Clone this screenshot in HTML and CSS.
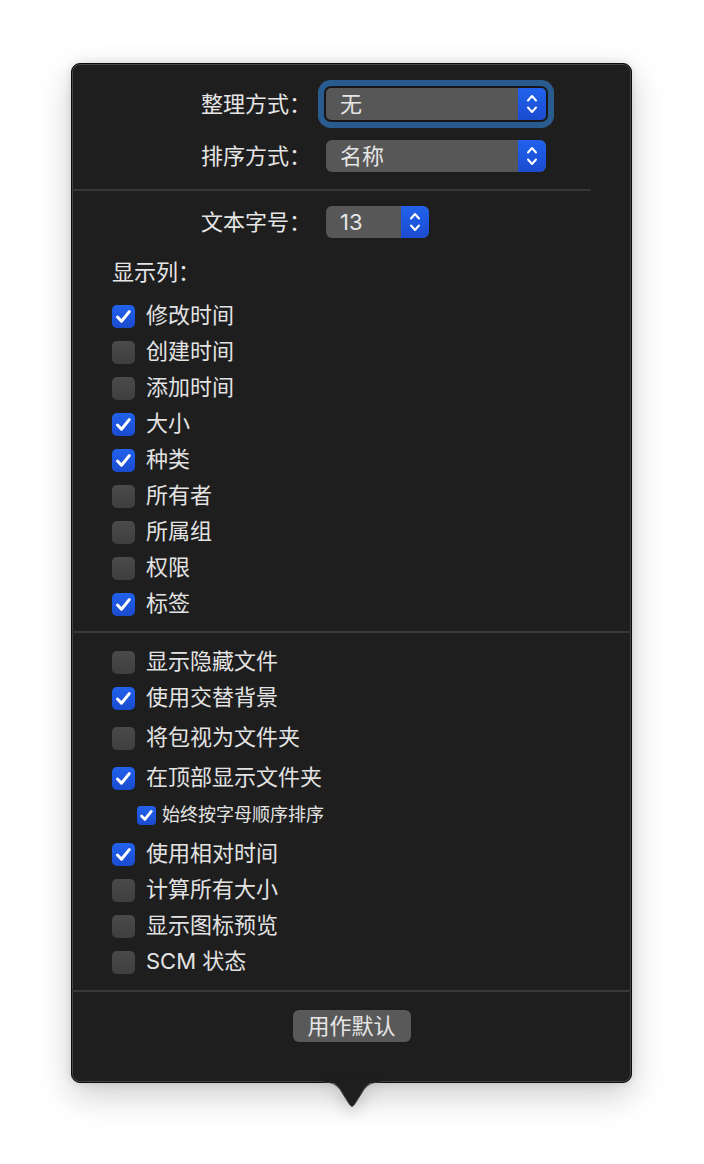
FILE: index.html
```html
<!DOCTYPE html>
<html lang="zh-CN">
<head>
<meta charset="utf-8">
<title>显示选项</title>
<link rel="stylesheet" href="styles.css">
</head>
<body>
<div class="stage">
  <div class="panel">
    <div class="field">
      <span class="label">整理方式：</span>
      <div class="popup wide focus">
        <span class="value">无</span>
        <span class="arrows"><svg viewBox="0 0 28 32" width="28" height="32"><path d="M10 12.5 L14 8 L18 12.5 M10 19.5 L14 24 L18 19.5"/></svg></span>
      </div>
    </div>
    <div class="field second">
      <span class="label">排序方式：</span>
      <div class="popup wide">
        <span class="value">名称</span>
        <span class="arrows"><svg viewBox="0 0 28 32" width="28" height="32"><path d="M10 12.5 L14 8 L18 12.5 M10 19.5 L14 24 L18 19.5"/></svg></span>
      </div>
    </div>
    <div class="divider short"></div>
    <div class="field">
      <span class="label">文本字号：</span>
      <div class="popup narrow">
        <span class="value">13</span>
        <span class="arrows"><svg viewBox="0 0 28 32" width="28" height="32"><path d="M10 12.5 L14 8 L18 12.5 M10 19.5 L14 24 L18 19.5"/></svg></span>
      </div>
    </div>
    <div class="heading"><span class="txt">显示列：</span></div>
    <ul class="checks cols">
      <li class="check"><span class="box on"><svg viewBox="0 0 23 23"><path d="M5.5 12 L9.5 16.2 L17.3 6.6"/></svg></span><span class="txt">修改时间</span></li>
      <li class="check"><span class="box"></span><span class="txt">创建时间</span></li>
      <li class="check"><span class="box"></span><span class="txt">添加时间</span></li>
      <li class="check"><span class="box on"><svg viewBox="0 0 23 23"><path d="M5.5 12 L9.5 16.2 L17.3 6.6"/></svg></span><span class="txt">大小</span></li>
      <li class="check"><span class="box on"><svg viewBox="0 0 23 23"><path d="M5.5 12 L9.5 16.2 L17.3 6.6"/></svg></span><span class="txt">种类</span></li>
      <li class="check"><span class="box"></span><span class="txt">所有者</span></li>
      <li class="check"><span class="box"></span><span class="txt">所属组</span></li>
      <li class="check"><span class="box"></span><span class="txt">权限</span></li>
      <li class="check"><span class="box on"><svg viewBox="0 0 23 23"><path d="M5.5 12 L9.5 16.2 L17.3 6.6"/></svg></span><span class="txt">标签</span></li>
    </ul>
    <div class="divider mid"></div>
    <ul class="checks opts">
      <li class="check"><span class="box"></span><span class="txt">显示隐藏文件</span></li>
      <li class="check"><span class="box on"><svg viewBox="0 0 23 23"><path d="M5.5 12 L9.5 16.2 L17.3 6.6"/></svg></span><span class="txt">使用交替背景</span></li>
      <li class="check spaced"><span class="box"></span><span class="txt">将包视为文件夹</span></li>
      <li class="check spaced"><span class="box on"><svg viewBox="0 0 23 23"><path d="M5.5 12 L9.5 16.2 L17.3 6.6"/></svg></span><span class="txt">在顶部显示文件夹</span></li>
      <li class="check sub"><span class="box on"><svg viewBox="0 0 23 23"><path d="M5.5 12 L9.5 16.2 L17.3 6.6"/></svg></span><span class="txt">始终按字母顺序排序</span></li>
      <li class="check"><span class="box on"><svg viewBox="0 0 23 23"><path d="M5.5 12 L9.5 16.2 L17.3 6.6"/></svg></span><span class="txt">使用相对时间</span></li>
      <li class="check"><span class="box"></span><span class="txt">计算所有大小</span></li>
      <li class="check"><span class="box"></span><span class="txt">显示图标预览</span></li>
      <li class="check"><span class="box"></span><span class="txt">SCM 状态</span></li>
    </ul>
    <div class="divider bottom"></div>
    <div class="footer"><button class="btn" type="button">用作默认</button></div>
    <svg class="beak" viewBox="0 0 60 28" width="60" height="28">
      <path class="beak-fill" d="M0 0 C9 0 13 2 18 8 L27.6 23.6 Q30 27 32.4 23.6 L42 8 C47 2 51 0 60 0 Z"/>
      <path class="beak-line" d="M0 1 C9 1 13 2.5 18 8.5 L27.6 23.6 Q30 27 32.4 23.6 L42 8.5 C47 2.5 51 1 60 1"/>
      <rect class="beak-cover" x="1" y="0" width="58" height="1.2"/>
    </svg>
  </div>
</div>
</body>
</html>
```

FILE: styles.css
```css
html, body {
  margin: 0;
  background: #ffffff;
}

body {
  font-family: "Inter", "Noto Sans CJK SC", sans-serif;
  color: #e3e3e3;
  font-size: 22px;
}

.stage {
  box-sizing: border-box;
  min-height: 1164px;
  padding: 63px 0 0 71px;
}

.panel {
  position: relative;
  width: 559px;
  padding: 24px 0 40px;
  background: #1e1e1e;
  border: 1px solid #0b0b0b;
  border-radius: 9px;
  box-shadow: inset 0 0 0 1px #464646, 0 12px 34px rgba(0, 0, 0, 0.2), 0 0 8px rgba(0, 0, 0, 0.12);
}

.field {
  display: flex;
  align-items: center;
  height: 32px;
}

.field.second {
  margin-top: 20px;
}

.label {
  width: 254px;
  padding-right: 15px;
  box-sizing: border-box;
  text-align: right;
  line-height: 32px;
  white-space: nowrap;
  color: #e6e6e6;
}

.popup {
  display: flex;
  height: 32px;
  border-radius: 6px;
  background: #575757;
  overflow: hidden;
  box-sizing: border-box;
}

.popup.wide {
  width: 220px;
}

.popup.narrow {
  width: 103px;
}

.popup.focus {
  overflow: visible;
  box-shadow: 0 0 0 2px #161616, 0 0 0 8px #2a5b8e;
  border-radius: 5px;
}

.popup .value {
  flex: 1;
  padding-left: 14px;
  line-height: 32px;
  color: #e6e6e6;
}

.popup .arrows {
  width: 28px;
  height: 32px;
  background: linear-gradient(#2262ec, #1a4bd0);
  border-radius: 0 6px 6px 0;
  display: flex;
}

.popup.focus .arrows {
  border-radius: 0 5px 5px 0;
}

.popup .arrows svg path {
  fill: none;
  stroke: #ffffff;
  stroke-width: 2;
  stroke-linecap: round;
  stroke-linejoin: round;
}

.divider {
  height: 2px;
  background: #383838;
}

.divider.short {
  margin: 17px 40px 15px 0;
}

.divider.mid {
  margin-top: 9px;
}

.divider.bottom {
  margin-top: 10px;
}

.heading {
  margin-top: 17px;
  height: 36px;
  display: flex;
  align-items: center;
  padding-left: 40px;
  color: #e6e6e6;
}

.txt {
  line-height: 30px;
  padding-bottom: 2px;
}

.checks {
  list-style: none;
  margin: 0;
  padding: 0 0 0 40px;
}

.checks.cols {
  margin-top: 7px;
}

.checks.opts {
  margin-top: 11px;
}

.check {
  display: flex;
  align-items: center;
  gap: 11px;
  height: 36px;
  white-space: nowrap;
}

.check.spaced {
  margin-top: 4px;
}

.check.sub {
  margin: 1px 0 3px;
  padding-left: 25px;
  gap: 6px;
  font-size: 18px;
}

.check.sub .txt {
  line-height: 26px;
  padding-bottom: 1px;
}

.box {
  flex: none;
  width: 23px;
  height: 23px;
  border-radius: 5px;
  background: linear-gradient(#4a4a4a, #3f3f3f);
  display: flex;
}

.box.on {
  background: linear-gradient(#2262ec, #1a4bd0);
}

.check.sub .box {
  width: 19px;
  height: 19px;
  border-radius: 4px;
}

.box svg {
  width: 100%;
  height: 100%;
}

.box svg path {
  fill: none;
  stroke: #ffffff;
  stroke-width: 3;
  stroke-linecap: round;
  stroke-linejoin: round;
}

.check.sub .box svg path {
  stroke-width: 3.4;
}

.footer {
  margin-top: 18px;
  display: flex;
  justify-content: center;
}

.btn {
  width: 118px;
  height: 32px;
  border: 0;
  border-radius: 6px;
  background: #595959;
  color: #e6e6e6;
  font-family: "Inter", "Noto Sans CJK SC", sans-serif;
  font-size: 22px;
  line-height: 32px;
  padding: 0;
}

.beak {
  position: absolute;
  left: calc(50% - 30px);
  bottom: -27px;
  overflow: visible;
  filter: drop-shadow(0 6px 8px rgba(0, 0, 0, 0.18));
}

.beak-fill {
  fill: #1e1e1e;
}

.beak-line {
  fill: none;
  stroke: #3e3e3e;
  stroke-width: 1;
}

.beak-cover {
  fill: #1e1e1e;
}
```
